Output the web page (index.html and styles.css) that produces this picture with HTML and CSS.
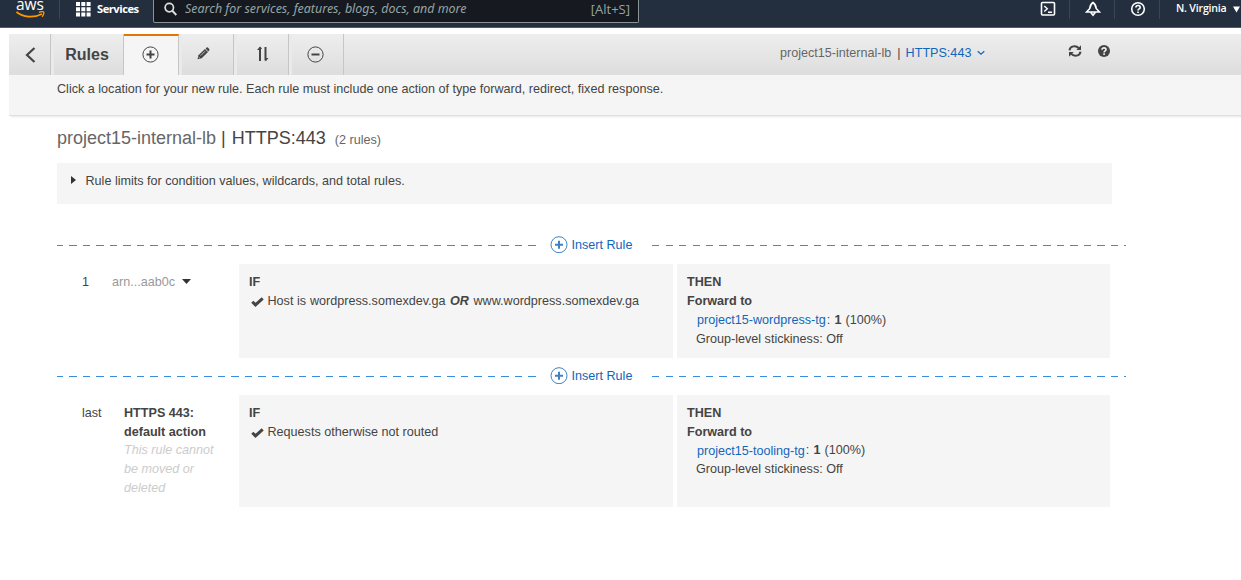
FILE: index.html
```html
<!DOCTYPE html>
<html lang="en">
<head>
<meta charset="utf-8">
<title>Rules</title>
<link rel="stylesheet" href="styles.css">
</head>
<body>
<header class="nav">
  <div class="logo">
    <span class="logo-text">aws</span>
    <svg width="30" height="8" viewBox="0 0 30 8"><path d="M.5 1C7 6.500 18 7 26 3" fill="none" stroke="#f90" stroke-width="1.700"/><path d="M23 1.300c2-.8 4-.8 4.700-.2.4.8-.3 3.300-1.700 4.600" fill="none" stroke="#f90" stroke-width="1.300"/></svg>
  </div>
  <div class="services">
    <svg width="15" height="15" viewBox="0 0 15 15" fill="#fff"><path d="M0 0h4v4H0zM5.300 0h4v4h-4zM10.600 0h4v4h-4zM0 5.300h4v4H0zM5.300 5.300h4v4h-4zM10.600 5.300h4v4h-4zM0 10.600h4v4H0zM5.300 10.600h4v4h-4zM10.600 10.600h4v4h-4z"/></svg>
    <span>Services</span>
  </div>
  <div class="search">
    <svg width="13" height="14" viewBox="0 0 13 14" fill="none" stroke="#ddd"><circle cx="5.300" cy="5.600" r="4.200" stroke-width="1.700"/><path d="M8.300 8.800l4 4.200" stroke-width="2"/></svg>
    <span class="placeholder">Search for services, features, blogs, docs, and more</span>
    <span class="shortcut">[Alt+S]</span>
  </div>
  <div class="nav-icons">
    <span class="nav-icon"><svg width="16" height="16" viewBox="0 0 16 16" fill="none" stroke="#fff"><rect x="1.500" y="1.500" width="13" height="12.500" rx="1" stroke-width="1.600"/><path d="M4.300 5l3 2.700-3 2.700M8 11.300h4" stroke-width="1.400"/></svg></span>
    <span class="nav-icon"><svg width="16" height="16" viewBox="0 0 16 16" fill="none" stroke="#fff" stroke-width="1.600"><path d="M8 1.500C5.800 3 5 4.500 4.800 7.500L1.500 11h13l-3.300-3.500C11 4.500 10.200 3 8 1.500zM5.800 11.500L8 14.300l2.200-2.800"/></svg></span>
    <span class="nav-icon"><svg width="16" height="16" viewBox="0 0 16 16" fill="none" stroke="#fff" stroke-width="1.600"><circle cx="8" cy="8" r="6.300"/><path d="M5.900 6.600c0-2.800 4.300-2.700 4.300-.2C10.200 8 8 7.700 8 9.500M8 10.400V12"/></svg></span>
    <span class="region">N. Virginia <svg width="7" height="7" viewBox="0 0 7 7"><path d="M0 .5h7L3.500 6.500z" fill="#fff"/></svg></span>
  </div>
</header>

<div class="toolbar">
  <div class="tab back"><svg width="11" height="16" viewBox="0 0 11 16" fill="none" stroke="#444" stroke-width="2.200"><path d="M9.500 1L2 8l7.500 7"/></svg></div>
  <div class="tab heading">Rules</div>
  <div class="tab active"><svg width="17" height="17" viewBox="0 0 17 17" fill="none" stroke="#444"><circle cx="8.500" cy="8.500" r="7.600"/><path d="M8.500 4.500v8M4.500 8.500h8" stroke-width="2"/></svg></div>
  <div class="tab pencil"><svg width="13" height="13" viewBox="0 0 13 13"><path d="M.5 12.200l1-4L7.900 1.900l3.100 3.100L4.700 11.200z" fill="#444"/><path d="M8.600 1.400L9.600.5q.7-.5 1.500.2l1.100 1.200q.6.700 0 1.500l-.9 1z" fill="#444"/><path d="M3.700 8.600L8.200 4.100M1.700 10l1.100 1.100" stroke="#ddd" stroke-width=".8"/></svg></div>
  <div class="tab sort"><svg width="12" height="16" viewBox="0 0 12 16"><path d="M3 15V1.500M8.500 1v13.500" stroke="#444" stroke-width="2"/><path d="M0 4L3 .5V4zM11.500 12l-3 3.500V12zM3 .5L5 2.500 3 4zM6.500 13.500l2 2z" fill="#444"/></svg></div>
  <div class="tab remove"><svg width="17" height="17" viewBox="0 0 17 17" fill="none" stroke="#444"><circle cx="8.500" cy="8.500" r="7.600"/><path d="M4.500 8.500h8" stroke-width="2"/></svg></div>
  <div class="listener"><span class="muted">project15-internal-lb</span><span class="bar">|</span><a>HTTPS:443</a><svg width="8" height="6" viewBox="0 0 8 6" fill="none" stroke="#1166bb" stroke-width="1.200"><path d="M.7 1.200L4 4.300l3.300-3.100"/></svg></div>
  <div class="tools">
    <svg width="14" height="12" viewBox="0 0 14 12" fill="none" stroke="#444" stroke-width="2"><path d="M1.500 5.300C2 .8 8 0 11 3.300M12.500 6.700C12 11.200 6 12 3 8.700"/><path d="M13 .3v4.700H8.300zM1 11.700V7h4.700z" fill="#444" stroke="none"/></svg>
    <svg width="12" height="12" viewBox="0 0 12 12"><circle cx="6" cy="6" r="6" fill="#444"/><path d="M4 4.700c0-2.500 4-2.300 4 0C8 6 6.100 5.900 6.100 7.500M6.100 8.300v1.600" fill="none" stroke="#f0f0f0" stroke-width="1.600"/></svg>
  </div>
</div>
<div class="hint">Click a location for your new rule. Each rule must include one action of type forward, redirect, fixed response.</div>

<main class="content">
  <h1 class="title"><span class="muted">project15-internal-lb</span> | <span class="port">HTTPS:443</span> <small>(2 rules)</small></h1>
  <div class="limits"><svg width="5" height="8" viewBox="0 0 5 8"><path d="M0 0l5 4-5 4z" fill="#333"/></svg>Rule limits for condition values, wildcards, and total rules.</div>

  <div class="insert">
    <span class="dash dash-left"></span>
    <a class="insert-link"><svg width="18" height="17" viewBox="0 0 18 17" fill="none" stroke="#3f82c4"><circle cx="9" cy="8.700" r="8"/><path d="M9 4.700v8M5 8.700h8" stroke-width="2"/></svg>Insert Rule</a>
    <span class="dash dash-right"></span>
  </div>

  <section class="rule">
    <div class="order">1</div>
    <div class="rule-name arn">arn...aab0c<svg width="9" height="5" viewBox="0 0 9 5"><path d="M0 0h9L4.500 5z" fill="#333"/></svg></div>
    <div class="panel if">
      <div class="kw">IF</div>
      <div class="cond"><svg width="13" height="10" viewBox="0 0 13 10"><path d="M1.300 4.700l3.200 3.200 7.200-6.600" fill="none" stroke="#444" stroke-width="3"/></svg><span>Host is <span class="host">wordpress.somexdev.ga</span> <b class="or">OR</b> www.wordpress.somexdev.ga</span></div>
    </div>
    <div class="panel then">
      <div class="kw">THEN</div>
      <div class="kw">Forward to</div>
      <div class="target"><a>project15-wordpress-tg</a><span class="weight">: <b>1</b> (100%)</span></div>
      <div class="sticky">Group-level stickiness: Off</div>
    </div>
  </section>

  <div class="insert second">
    <span class="dash dash-left"></span>
    <a class="insert-link"><svg width="18" height="17" viewBox="0 0 18 17" fill="none" stroke="#3f82c4"><circle cx="9" cy="8.700" r="8"/><path d="M9 4.700v8M5 8.700h8" stroke-width="2"/></svg>Insert Rule</a>
    <span class="dash dash-right"></span>
  </div>

  <section class="rule last">
    <div class="order">last</div>
    <div class="rule-name default"><b>HTTPS 443:<br>default action</b><p class="note">This rule cannot<br>be moved or<br>deleted</p></div>
    <div class="panel if">
      <div class="kw">IF</div>
      <div class="cond"><svg width="13" height="10" viewBox="0 0 13 10"><path d="M1.300 4.700l3.200 3.200 7.200-6.600" fill="none" stroke="#444" stroke-width="3"/></svg><span>Requests otherwise not routed</span></div>
    </div>
    <div class="panel then">
      <div class="kw">THEN</div>
      <div class="kw">Forward to</div>
      <div class="target"><a>project15-tooling-tg</a><span class="weight">: <b>1</b> (100%)</span></div>
      <div class="sticky">Group-level stickiness: Off</div>
    </div>
  </section>
</main>
</body>
</html>
```
FILE: styles.css
```css
* { box-sizing: border-box; }
body {
  margin: 0;
  height: 580px;
  overflow: hidden;
  background: #fff;
  color: #444;
  font: 12.6px/19px "Liberation Sans", Arial, sans-serif;
}
svg { display: block; flex: none; }
a { color: #1166bb; }
.muted { color: #666; }

.nav {
  display: flex;
  height: 28px;
  background: #232f3e;
  border-bottom: 1px solid #545b64;
  color: #fff;
  font-family: "Open Sans", "Noto Sans", sans-serif;
}
.logo { width: 60px; height: 19px; padding-left: 16px; border-right: 1px solid #3b4654; }
.logo-text { display: block; height: 11px; line-height: 8px; font-size: 15.5px; font-weight: 500; letter-spacing: -.1px; }
.services { display: flex; width: 93px; padding: 2px 0 0 16px; gap: 6px; font-size: 11.2px; font-weight: 700; letter-spacing: -.5px; line-height: 13px; }
.search {
  display: flex;
  width: 486px;
  height: 23px;
  padding: 2px 8px 0 10px;
  background: #16191f;
  border: 1px solid #879596;
  border-top: 0;
  border-radius: 0 0 2px 2px;
  color: #95a5a6;
  line-height: 14px;
}
.placeholder { flex: 1; margin-left: 8px; font-family: "Noto Sans", sans-serif; font-size: 12.45px; font-style: italic; white-space: nowrap; }
.shortcut { font-size: 13px; }
.nav-icons { display: flex; flex: 1; justify-content: flex-end; height: 19px; }
.nav-icon { width: 45px; padding: 1px 0 0 15px; border-right: 1px solid #3b4654; }
.region { display: flex; width: 81px; padding: 1px 0 0 16px; gap: 6px; font-size: 10.6px; font-weight: 600; letter-spacing: -.2px; line-height: 15px; white-space: nowrap; }
.region svg { margin-top: 5px; }

.toolbar {
  display: flex;
  height: 41px;
  margin: 6px 0 0 9px;
  background: linear-gradient(#eee, #ddd);
}
.tab {
  display: flex;
  align-items: center;
  justify-content: center;
  width: 55px;
  border-right: 1px solid #c6c6c6;
  box-shadow: inset 3px 0 #eaeaea;
}
.back { width: 42px; padding-left: 1px; box-shadow: none; }
.heading { width: 73px; color: #444; font-size: 16px; font-weight: 700; }
.active { background: #f5f5f5; border-top: 2px solid #e07700; box-shadow: none; padding-right: 1px; }
.active svg { margin-top: -3px; }
.pencil { padding: 0 5px 3px 0; }
.sort { padding: 0 0 2px 4px; }
.remove { padding: 0 1px 1px 0; }
.listener { display: flex; margin-left: 436px; padding-top: 10px; white-space: nowrap; }
.bar { margin: 0 5px 0 6px; }
.listener svg { margin: 6px 0 0 6px; }
.tools { display: flex; gap: 16px; margin-left: 83px; padding-top: 11px; }
.hint {
  height: 41px;
  margin-left: 9px;
  padding: 5px 0 0 48px;
  background: #f5f5f5;
  border-bottom: 1px solid #e0e0e0;
  box-shadow: 2px 1px 2px #e6e6e6;
  white-space: nowrap;
}

.content { width: 1069px; margin-left: 57px; }
.title { margin: 0; padding-top: 11px; height: 47px; font-size: 18px; line-height: 22px; font-weight: 400; color: #444; }
.port { margin-left: 1px; }
.title small { margin-left: 4px; font-size: 12.6px; color: #666; }
.limits { display: flex; width: 1055px; height: 41px; padding: 9px 0 0 14px; gap: 9.5px; background: #f5f5f5; }
.limits svg { margin-top: 4px; }

.insert { display: flex; height: 60px; padding-top: 32px; }
.insert.second { height: 37px; padding-top: 9px; }
.dash { height: 1px; margin-top: 9px; background: repeating-linear-gradient(90deg, #3a8dde 0 7.4px, transparent 7.4px 13.5px); }
.dash-left { width: 480px; background: repeating-linear-gradient(90deg, #3a8dde 0 6.2px, transparent 6.2px 12.3px, #3a8dde 12.3px 13.5px); }
.dash-right { width: 474px; }
.insert-link { display: flex; width: 115px; padding-left: 13px; gap: 3.5px; }

.rule { display: flex; height: 94px; line-height: 19px; }
.rule.last { height: 112px; }
.order { width: 55px; padding: 9px 0 0 25px; }
.rule-name { width: 127px; padding-top: 9px; }
.arn { display: flex; gap: 7px; color: #999; }
.arn svg { margin-top: 6px; }
.default { padding-left: 12px; }
.note { margin: -1px 0 0; color: #ccc; font-style: italic; }
.panel { background: #f5f5f5; padding: 9px 0 0 10px; white-space: nowrap; }
.panel.if { width: 434px; margin-right: 4px; }
.panel.then { width: 433px; }
.kw { font-weight: 700; }
.cond { display: flex; gap: 3.5px; padding-left: 2px; }
.cond svg { margin-top: 5px; }
.host { margin: 0 1px 0 .5px; }
.or { margin-right: 1px; font-style: italic; }
.target { display: flex; padding-left: 10px; }
.weight { margin-left: 1px; word-spacing: .6px; }
.sticky { padding-left: 9px; }
.last .target span, .last .sticky { margin-top: -1px; }
```
